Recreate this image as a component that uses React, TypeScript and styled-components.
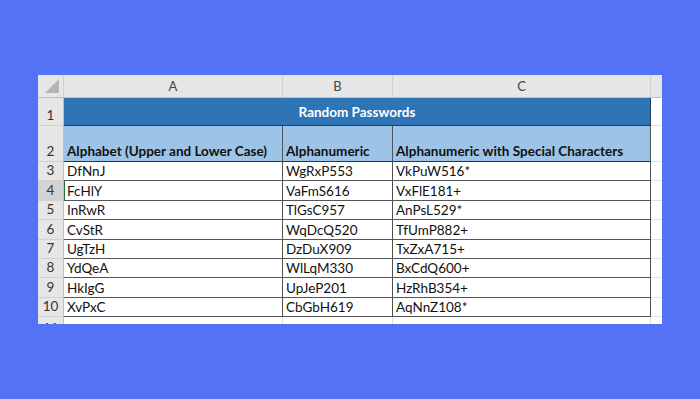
import React from "react";
import styled, { createGlobalStyle } from "styled-components";

const GlobalStyle = createGlobalStyle`
  html, body { margin: 0; padding: 0; }
  body {
    width: 700px;
    height: 399px;
    background: #5472f6;
    font-family: Lato, "Open Sans", sans-serif;
  }
`;

const Page = styled.div`
  width: 700px;
  height: 399px;
  display: flex;
  align-items: center;
  justify-content: center;
`;

const Sheet = styled.div`
  width: 624px;
  height: 249px;
  overflow: hidden;
  background: #ffffff;
  display: grid;
  grid-template-columns: 26px 219px 110px 258px 11px;
  grid-template-rows: 23px 28px 36px repeat(8, 19.4px) 20px;
  font-size: 13.5px;
  color: #111;
`;

const Corner = styled.div`
  background: #e6e6e6;
  border-right: 1px solid #cfcfcf;
  border-bottom: 1px solid #bdbdbd;
  display: flex;
  align-items: flex-end;
  justify-content: flex-end;
  padding: 0 4px 4px 0;
  box-sizing: border-box;
`;

const Triangle = styled.div`
  width: 0;
  height: 0;
  border-left: 14px solid transparent;
  border-bottom: 14px solid #b4b4b4;
`;

const ColHeader = styled.div<{ $last?: boolean }>`
  background: #e6e6e6;
  border-right: 1px solid ${(p) => (p.$last ? "transparent" : "#cfcfcf")};
  border-bottom: 1px solid #bdbdbd;
  display: flex;
  align-items: center;
  justify-content: center;
  color: #444;
  font-size: 13px;
  box-sizing: border-box;
`;

const RowHeader = styled.div<{ $active?: boolean; $cut?: boolean }>`
  background: ${(p) => (p.$active ? "#d3d3d3" : "#e6e6e6")};
  border-right: 1px solid #bdbdbd;
  border-bottom: 1px solid #d0d0d0;
  display: flex;
  align-items: flex-end;
  justify-content: center;
  padding-bottom: ${(p) => (p.$cut ? "0" : "2px")};
  color: #333;
  font-size: 13.5px;
  box-sizing: border-box;
`;

const TitleCell = styled.div`
  grid-column: span 3;
  background: #2e75b6;
  border-bottom: 1px solid #1f3d5c;
  border-right: 1px solid #1f3d5c;
  color: #ffffff;
  font-weight: 700;
  display: flex;
  align-items: center;
  justify-content: center;
  box-sizing: border-box;
`;

const HeadCell = styled.div`
  background: #9dc3e6;
  border-right: 1px solid #4a5560;
  border-bottom: 1px solid #333;
  font-weight: 700;
  color: #111;
  display: flex;
  align-items: flex-end;
  padding: 0 0 2px 3px;
  white-space: nowrap;
  box-sizing: border-box;
`;

const DataCell = styled.div<{ $selected?: boolean }>`
  background: #ffffff;
  border-right: 1px solid #505050;
  border-bottom: 1px solid #555;
  border-left: ${(p) => (p.$selected ? "1px solid #217346" : "none")};
  display: flex;
  align-items: flex-end;
  padding: 0 0 1px ${(p) => (p.$selected ? "2px" : "3px")};
  white-space: nowrap;
  box-sizing: border-box;
`;

const Filler = styled.div<{ $header?: boolean }>`
  background: ${(p) => (p.$header ? "#e6e6e6" : "#ffffff")};
  border-bottom: 1px solid #e2e2e2;
  box-sizing: border-box;
`;

const BlankCell = styled.div`
  border-right: 1px solid #e2e2e2;
  box-sizing: border-box;
`;

const rows = [
  ["DfNnJ", "WgRxP553", "VkPuW516*"],
  ["FcHlY", "VaFmS616", "VxFlE181+"],
  ["InRwR", "TlGsC957", "AnPsL529*"],
  ["CvStR", "WqDcQ520", "TfUmP882+"],
  ["UgTzH", "DzDuX909", "TxZxA715+"],
  ["YdQeA", "WlLqM330", "BxCdQ600+"],
  ["HkIgG", "UpJeP201", "HzRhB354+"],
  ["XvPxC", "CbGbH619", "AqNnZ108*"],
];

export default function App() {
  return (
    <>
      <GlobalStyle />
      <Page>
        <Sheet>
          <Corner>
            <Triangle />
          </Corner>
          <ColHeader>A</ColHeader>
          <ColHeader>B</ColHeader>
          <ColHeader>C</ColHeader>
          <ColHeader $last />

          <RowHeader>1</RowHeader>
          <TitleCell>Random Passwords</TitleCell>
          <Filler />

          <RowHeader>2</RowHeader>
          <HeadCell>Alphabet (Upper and Lower Case)</HeadCell>
          <HeadCell>Alphanumeric</HeadCell>
          <HeadCell>Alphanumeric with Special Characters</HeadCell>
          <Filler />

          {rows.map((r, i) => (
            <React.Fragment key={i}>
              <RowHeader $active={i === 1}>{i + 3}</RowHeader>
              <DataCell $selected={i === 1}>{r[0]}</DataCell>
              <DataCell>{r[1]}</DataCell>
              <DataCell>{r[2]}</DataCell>
              <Filler />
            </React.Fragment>
          ))}

          <RowHeader $cut>11</RowHeader>
          <BlankCell />
          <BlankCell />
          <BlankCell />
          <Filler />
        </Sheet>
      </Page>
    </>
  );
}
